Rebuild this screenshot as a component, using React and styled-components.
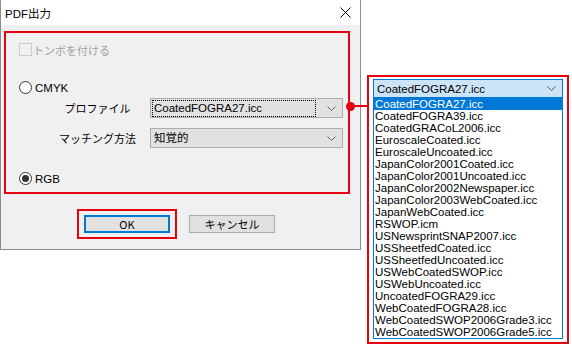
import styled, { createGlobalStyle } from 'styled-components';

const RED = '#e50012';
const BLUE = '#0078d7';

const profiles = [
  'CoatedFOGRA27.icc',
  'CoatedFOGRA39.icc',
  'CoatedGRACoL2006.icc',
  'EuroscaleCoated.icc',
  'EuroscaleUncoated.icc',
  'JapanColor2001Coated.icc',
  'JapanColor2001Uncoated.icc',
  'JapanColor2002Newspaper.icc',
  'JapanColor2003WebCoated.icc',
  'JapanWebCoated.icc',
  'RSWOP.icm',
  'USNewsprintSNAP2007.icc',
  'USSheetfedCoated.icc',
  'USSheetfedUncoated.icc',
  'USWebCoatedSWOP.icc',
  'USWebUncoated.icc',
  'UncoatedFOGRA29.icc',
  'WebCoatedFOGRA28.icc',
  'WebCoatedSWOP2006Grade3.icc',
  'WebCoatedSWOP2006Grade5.icc',
];

const GlobalStyle = createGlobalStyle`
  html, body {
    margin: 0;
    padding: 0;
    background: #fff;
  }
  body {
    font-family: "Liberation Sans", "Noto Sans CJK JP", sans-serif;
    font-size: 11px;
    color: #000;
  }
`;

function Chevron({ color = '#606060' }) {
  return (
    <svg width="9" height="5" viewBox="0 0 9 5">
      <path d="M0.5 0.5 L4.5 4.5 L8.5 0.5" fill="none" stroke={color} strokeWidth="1" />
    </svg>
  );
}

function CloseIcon() {
  return (
    <svg width="11" height="11" viewBox="0 0 11 11">
      <path d="M0.5 0.5 L10.5 10.5 M10.5 0.5 L0.5 10.5" stroke="#000" strokeWidth="1" />
    </svg>
  );
}

function Select({ value, focused }) {
  return (
    <SelectBox>
      <SelectValue $focused={focused}>{value}</SelectValue>
      <Chevron />
    </SelectBox>
  );
}

export default function App() {
  return (
    <Page>
      <GlobalStyle />
      <Dialog>
        <TitleBar>
          <Title>PDF出力</Title>
          <CloseIcon />
        </TitleBar>
        <Body>
          <Highlight>
            <CheckRow>
              <CheckBox />
              <JpText>トンボを付ける</JpText>
            </CheckRow>
            <RadioRow $top={25}>
              <Radio />
              <span>CMYK</span>
            </RadioRow>
            <FieldRow $top={4}>
              <FieldLabel>プロファイル</FieldLabel>
              <Select value="CoatedFOGRA27.icc" focused />
            </FieldRow>
            <FieldRow $top={10}>
              <FieldLabel>マッチング方法</FieldLabel>
              <Select value="知覚的" />
            </FieldRow>
            <RadioRow $top={24}>
              <Radio $checked />
              <span>RGB</span>
            </RadioRow>
          </Highlight>
          <Buttons>
            <ButtonMark>
              <Button $default>OK</Button>
            </ButtonMark>
            <Button>キャンセル</Button>
          </Buttons>
        </Body>
      </Dialog>

      <Popup>
        <ComboHead>
          <span>CoatedFOGRA27.icc</span>
          <Chevron color="#555" />
        </ComboHead>
        <List>
          {profiles.map((p, i) => (
            <Item key={p} $selected={i === 0}>
              {p}
            </Item>
          ))}
        </List>
      </Popup>

      <Connector />
      <Dot />
    </Page>
  );
}

const Page = styled.div`
  position: relative;
  display: flex;
  align-items: flex-start;
  width: 572px;
  height: 348px;
  overflow: hidden;
`;

const Dialog = styled.div`
  width: 359px;
  height: 249px;
  flex-shrink: 0;
  background: #f0f0f0;
  border: 1px solid #8c8c8c;
  border-top: none;
  display: flex;
  flex-direction: column;
`;

const TitleBar = styled.div`
  height: 25px;
  background: #fff;
  display: flex;
  align-items: center;
  justify-content: space-between;
  padding: 0 9px 0 4px;
  box-sizing: border-box;
`;

const Title = styled.span`
  font-size: 11.5px;
`;

const Body = styled.div`
  display: flex;
  flex-direction: column;
  padding: 6px 0 0 3px;
`;

const Highlight = styled.div`
  border: 2px solid ${RED};
  padding: 10px 0 0 13px;
  width: 329px;
  height: 149px;
  display: flex;
  flex-direction: column;
`;

const JpText = styled.span`
  font-family: "Noto Sans CJK JP", sans-serif;
  font-size: 11px;
`;

const CheckRow = styled.div`
  display: flex;
  align-items: center;
  height: 13px;
  color: #a0a0a0;
`;

const CheckBox = styled.span`
  width: 11px;
  height: 11px;
  border: 1px solid #cccccc;
  background: #f0f0f0;
  margin-right: 1px;
`;

const RadioRow = styled.div`
  display: flex;
  align-items: center;
  height: 13px;
  margin-top: ${({ $top }) => $top}px;
  gap: 3px;
  font-size: 11.5px;
`;

const Radio = styled.span`
  width: 11px;
  height: 11px;
  border: 1px solid #333;
  border-radius: 50%;
  background: #fff;
  display: flex;
  align-items: center;
  justify-content: center;

  &::after {
    content: '';
    display: ${({ $checked }) => ($checked ? 'block' : 'none')};
    width: 7px;
    height: 7px;
    border-radius: 50%;
    background: #333;
  }
`;

const FieldRow = styled.div`
  display: flex;
  align-items: center;
  padding-left: 26px;
  margin-top: ${({ $top }) => $top}px;
`;

const FieldLabel = styled.span`
  width: 105px;
  text-align: center;
  font-family: "Noto Sans CJK JP", sans-serif;
  font-size: 11px;
`;

const SelectBox = styled.div`
  width: 183px;
  height: 18px;
  background: #e1e1e1;
  border: 1px solid #adadad;
  display: flex;
  align-items: center;
  justify-content: space-between;
  padding: 0 6px 0 2px;
`;

const SelectValue = styled.span`
  flex: 1;
  height: 15px;
  line-height: 15px;
  margin-right: 12px;
  padding-left: 1px;
  outline: ${({ $focused }) => ($focused ? '1px dotted #000' : 'none')};
  font-size: 11.5px;
  font-family: "Liberation Sans", "Noto Sans CJK JP", sans-serif;
`;

const Buttons = styled.div`
  display: flex;
  align-items: center;
  gap: 12px;
  margin: 15px 0 0 73px;
`;

const ButtonMark = styled.div`
  border: 2px solid ${RED};
  padding: 4px 5px;
  display: flex;
`;

const Button = styled.div`
  width: 86px;
  height: 18px;
  box-sizing: border-box;
  background: #e1e1e1;
  border: ${({ $default }) => ($default ? `2px solid ${BLUE}` : '1px solid #adadad')};
  display: flex;
  align-items: center;
  justify-content: center;
  font-family: "Noto Sans CJK JP", sans-serif;
  font-size: 11px;
`;

const Popup = styled.div`
  margin: 75px 0 0 6px;
  border: 2px solid ${RED};
  padding: 2px 4px 3px 4px;
  width: 190px;
  display: flex;
  flex-direction: column;
`;

const ComboHead = styled.div`
  height: 17px;
  background: #cce4f7;
  border: 1px solid ${BLUE};
  border-bottom: none;
  display: flex;
  align-items: center;
  justify-content: space-between;
  padding: 0 6px 0 3px;
  font-size: 11.5px;
`;

const List = styled.div`
  border: 1px solid ${BLUE};
  background: #fff;
  display: flex;
  flex-direction: column;
`;

const Item = styled.div`
  height: 12px;
  line-height: 12px;
  padding-left: 1px;
  font-size: 11.5px;
  white-space: nowrap;
  background: ${({ $selected }) => ($selected ? BLUE : '#fff')};
  color: ${({ $selected }) => ($selected ? '#fff' : '#000')};
`;

const Connector = styled.div`
  position: absolute;
  left: 350px;
  top: 105px;
  width: 18px;
  height: 2px;
  background: ${RED};
`;

const Dot = styled.div`
  position: absolute;
  left: 346px;
  top: 102px;
  width: 9px;
  height: 9px;
  border-radius: 50%;
  background: ${RED};
`;
